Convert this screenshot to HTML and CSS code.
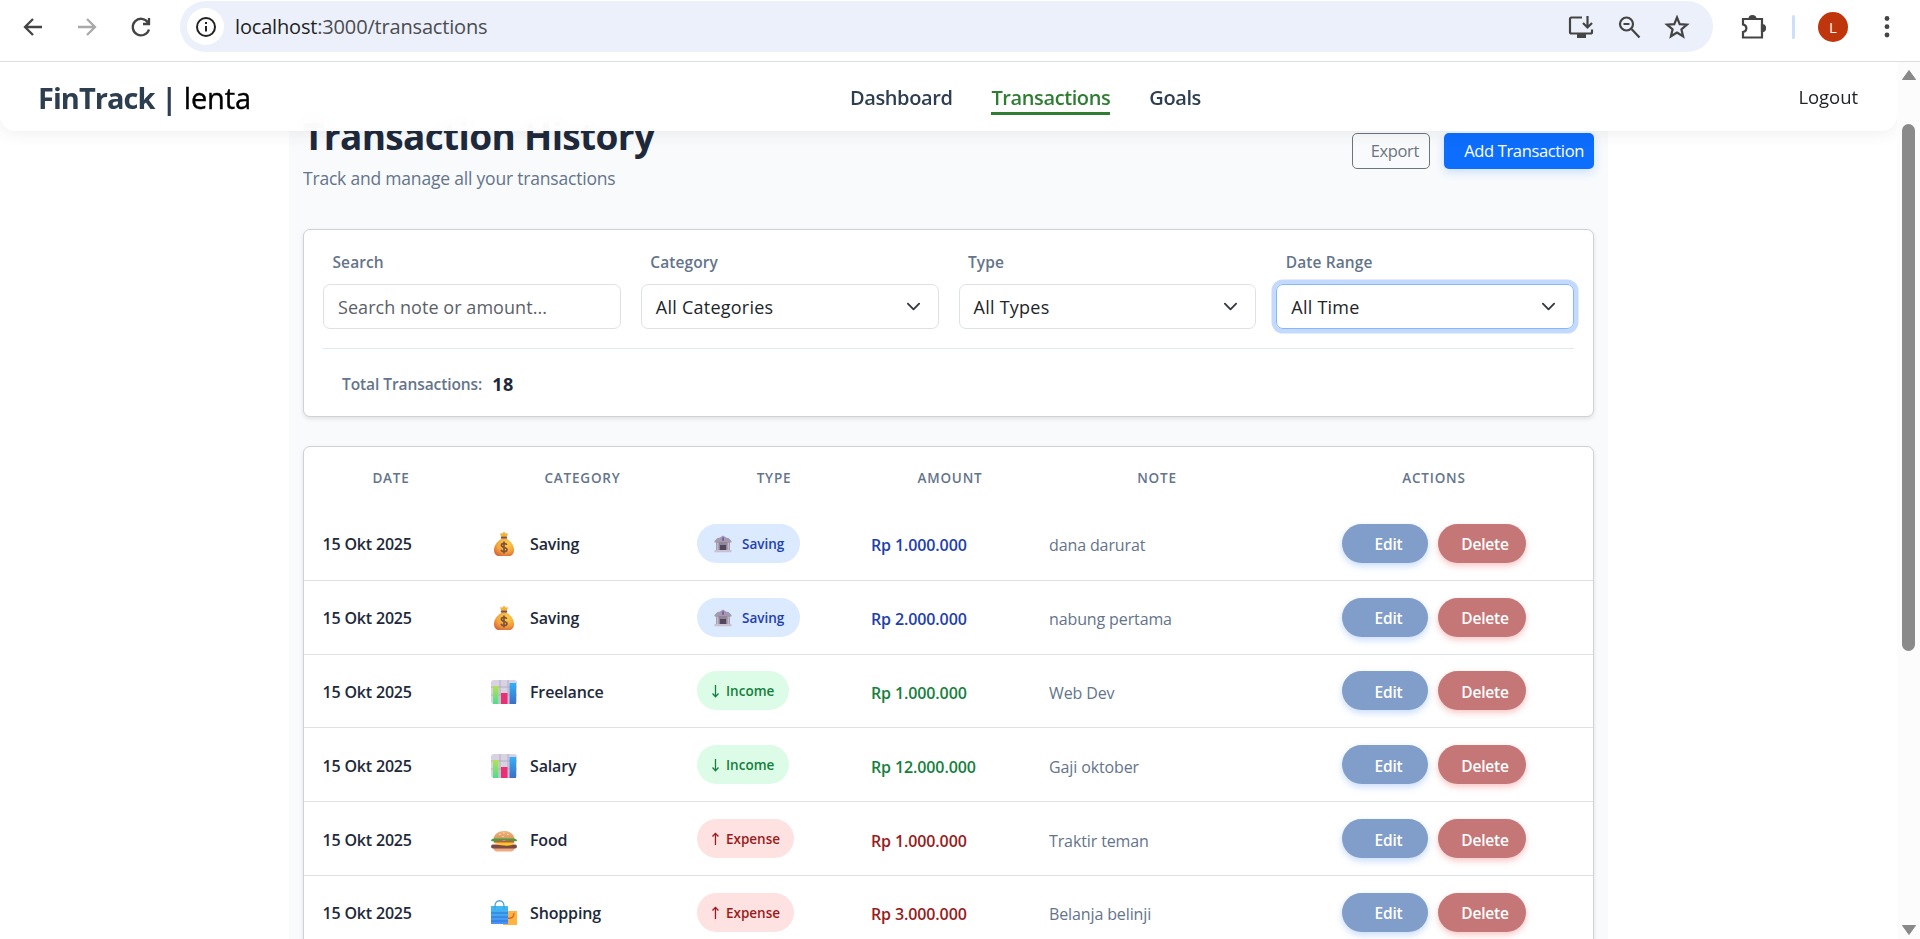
FILE: index.html
```html
<!DOCTYPE html>
<html lang="en">
<head>
<meta charset="utf-8">
<title>FinTrack</title>
<link rel="stylesheet" href="styles.css">
</head>
<body>
<svg class="defs" width="0" height="0">
  <defs>
    <radialGradient id="gBag" cx=".6" cy=".3" r=".8"><stop offset="0" stop-color="#ffd54a"/><stop offset=".6" stop-color="#f2a13a"/><stop offset="1" stop-color="#d3603c"/></radialGradient>
    <linearGradient id="gGreen" x1="0" y1="0" x2="0" y2="1"><stop offset="0" stop-color="#b4e34f"/><stop offset="1" stop-color="#4fdc92"/></linearGradient>
    <linearGradient id="gBlue" x1="0" y1="0" x2="0" y2="1"><stop offset="0" stop-color="#33b1fb"/><stop offset="1" stop-color="#3b6fc4"/></linearGradient>
    <linearGradient id="gShop" x1="0" y1="0" x2="0" y2="1"><stop offset="0" stop-color="#3fbcf0"/><stop offset="1" stop-color="#4a8cff"/></linearGradient>
    <linearGradient id="gBun" x1="0" y1="0" x2="0" y2="1"><stop offset="0" stop-color="#eeb67c"/><stop offset="1" stop-color="#d9935a"/></linearGradient>
  </defs>
  <symbol id="bag" viewBox="0 0 28 28">
    <path d="M11 9h6c4 2.500 7 6.500 7 11 0 4-2.500 6-5 6H9c-2.500 0-5-2-5-6C4 15.500 7 11.500 11 9z" fill="url(#gBag)"/>
    <path d="M14 1.500l1.500 2 2.500-.2-1.200 3.500h-5.600L10 3.300l2.500.2z" fill="#f5b136"/>
    <rect x="10.800" y="6.600" width="6.400" height="2.200" rx="1" fill="#8a5340"/>
    <path d="M16.800 15c-.5-1.300-1.500-1.700-2.800-1.700-1.600 0-2.600.8-2.600 2 0 2.800 5.600 1.500 5.600 4.300 0 1.400-1.300 2.200-3 2.200-1.500 0-2.500-.6-3-2M14 11.500v12" fill="none" stroke="#80503d" stroke-width="1.700"/>
  </symbol>
  <symbol id="chart" viewBox="0 0 28 28">
    <rect x="1" y="2" width="26" height="24" rx="3" fill="#d8d2e2"/>
    <path d="M10 2v24M18 2v24M1 9h26M1 17h26" stroke="#b6adc4" stroke-width="1"/>
    <path d="M3 8h5.500v18H3z" fill="url(#gGreen)"/>
    <path d="M11 15h6.500v11H11z" fill="#ea2f74"/>
    <path d="M19.500 5H26v21h-6.500z" fill="url(#gBlue)"/>
  </symbol>
  <symbol id="burger" viewBox="0 0 28 28">
    <path d="M3.500 14C3.500 8 8.500 5 14 5s10.500 3 10.500 9z" fill="url(#gBun)"/>
    <path d="M9 8.500h1.500M13 7h1.500M17 8.500h1.500M12 10.500h1.500" stroke="#fae3bd" stroke-width="1.200"/>
    <path d="M3.500 22h21c0 2-1.500 3.500-3.500 3.500H7c-2 0-3.500-1.500-3.500-3.500z" fill="#f0a880"/>
    <rect x="1" y="18.500" width="26" height="4" rx="2" fill="#7d4a43"/>
    <path d="M3 16h22l-3 3-5 .8-8-.8z" fill="#ffc928"/>
    <rect x="4" y="14.500" width="20" height="2" fill="#e8404f"/>
    <path d="M1 15c0-2 2-2.500 4-2.500h18c2 0 4 .5 4 2.500-2 1-4-.4-6.500 0s-3 .8-5-.2-4 .6-6 .4S3 16 1 15z" fill="#4f9c3c"/>
  </symbol>
  <symbol id="shop" viewBox="0 0 28 28">
    <path d="M13 12h14v14H13z" fill="#ffb43d"/>
    <path d="M17.500 19c4 1 6.500-1 6.500-5" fill="none" stroke="#e0632f" stroke-width="1.300"/>
    <path d="M1 7h17v18H1z" fill="url(#gShop)"/>
    <path d="M1 14h17M1 18h17M1 22h17" stroke="#2678c4" stroke-width="1.100"/>
    <path d="M5 10V7c0-7 9-7 9 0v3" fill="none" stroke="#4b9fd8" stroke-width="1.300"/>
  </symbol>
  <symbol id="bank" viewBox="0 0 18 18">
    <path d="M.5 6l3-3 2-.3L9 .5l3.500 2.200 2 .3 3 3v1.500H.5z" fill="#a39aae"/>
    <path d="M2 7h14v8H2z" fill="#8f8798"/>
    <path d="M2.500 7.500h2V15h-2zM13.500 7.500h2V15h-2z" fill="#c2bacb"/>
    <path d="M6 10h6v5H6z" fill="#51455f"/>
    <path d="M8.300 2.500h1.500v3.300H8.300z" fill="#7145b5"/>
    <path d="M.5 15h17v2.300H.5z" fill="#c9c0d0"/>
  </symbol>
  <symbol id="down" viewBox="0 0 9 16"><path d="M4.500 2v11.500M1.500 10.500l3 3.200 3-3.200"/></symbol>
  <symbol id="up" viewBox="0 0 9 16"><path d="M4.500 14V2.500M1.500 5.500l3-3.200 3 3.200"/></symbol>
  <symbol id="chev" viewBox="0 0 16 16"><path d="M2 5l6 6 6-6" fill="none" stroke="#343a40" stroke-width="2" stroke-linecap="round" stroke-linejoin="round"/></symbol>
</svg>

<div class="browser">
  <svg class="tool back" viewBox="0 0 24 24"><path d="M21 12H4M12 4l-8 8 8 8" /></svg>
  <svg class="tool fwd" viewBox="0 0 24 24"><path d="M3 12h17M12 4l8 8-8 8"/></svg>
  <svg class="tool reload" viewBox="0 0 24 24"><path d="M20 14.500A8.300 8.300 0 1 1 19 7.500M20 3v6h-6"/></svg>
  <div class="omnibox">
    <span class="site"><svg width="22" height="22" viewBox="0 0 22 22"><circle cx="11" cy="11" r="9" fill="none" stroke="#222" stroke-width="2"/><path d="M11 10v5.500M11 6v2" stroke="#222" stroke-width="2"/></svg></span>
    <span class="url"><b>localhost</b>:3000/transactions</span>
    <svg class="oi" viewBox="0 0 26 26"><path d="M14 3.500H3.500A1.500 1.500 0 0 0 2 5v13a1.500 1.500 0 0 0 1.500 1.500h19A1.500 1.500 0 0 0 24 18v-2.500M19.500 2v11M15 9l4.500 4.500L24 9"/><path d="M9 20h9v4H9z" fill="#444" stroke="none"/></svg>
    <svg class="oi" viewBox="0 0 26 26"><circle cx="10.500" cy="10" r="6.500"/><path d="M15.500 15l8 8.500M7.500 10h6"/></svg>
    <svg class="oi" viewBox="0 0 26 26"><path d="M13 3.500l2.700 6.700 7.200.5-5.500 4.600 1.700 7L13 18.500l-6.100 3.800 1.700-7-5.500-4.600 7.200-.5z"/></svg>
  </div>
  <svg class="ext" viewBox="0 0 26 26"><path d="M3 5h19v18.500H3v-5.500c4.500-.8 4.500-6.700 0-7.500z"/><path d="M9.500 5a3 3 0 0 1 6 0zM22 11a3 3 0 0 1 0 6z" fill="#444"/></svg>
  <i class="bar"></i>
  <span class="avatar">L</span>
  <svg class="dots" width="6" height="24" viewBox="0 0 6 24"><circle cx="3" cy="3.500" r="2.400"/><circle cx="3" cy="11.700" r="2.400"/><circle cx="3" cy="20" r="2.400"/></svg>
</div>

<div class="viewport">
  <div class="page">
    <nav class="nav">
      <div class="brand"><b>FinTrack |</b> <span>lenta</span></div>
      <div class="links"><a>Dashboard</a><a class="active">Transactions</a><a>Goals</a></div>
      <a class="logout">Logout</a>
    </nav>
    <main class="main">
      <header class="head">
        <div><h1>Transaction History</h1><p>Track and manage all your transactions</p></div>
        <div class="btns"><button class="export">Export</button><button class="add">Add Transaction</button></div>
      </header>
      <section class="card filters">
        <div class="fields">
          <div class="field"><label>Search</label><div class="ctl ph">Search note or amount...</div></div>
          <div class="field"><label>Category</label><div class="ctl">All Categories<svg><use href="#chev"/></svg></div></div>
          <div class="field"><label>Type</label><div class="ctl">All Types<svg><use href="#chev"/></svg></div></div>
          <div class="field"><label>Date Range</label><div class="ctl focus">All Time<svg><use href="#chev"/></svg></div></div>
        </div>
        <div class="total"><span>Total Transactions:</span><b>18</b></div>
      </section>
      <section class="card table">
        <div class="row th"><div>DATE</div><div>CATEGORY</div><div>TYPE</div><div>AMOUNT</div><div>NOTE</div><div>ACTIONS</div></div>
        <div class="row saving"><div class="date">15 Okt 2025</div><div class="cat"><svg><use href="#bag"/></svg>Saving</div><div><span class="badge"><svg class="emoji"><use href="#bank"/></svg>Saving</span></div><div class="amt">Rp 1.000.000</div><div class="note">dana darurat</div><div class="act"><button class="edit">Edit</button><button class="del">Delete</button></div></div>
        <div class="row saving"><div class="date">15 Okt 2025</div><div class="cat"><svg><use href="#bag"/></svg>Saving</div><div><span class="badge"><svg class="emoji"><use href="#bank"/></svg>Saving</span></div><div class="amt">Rp 2.000.000</div><div class="note">nabung pertama</div><div class="act"><button class="edit">Edit</button><button class="del">Delete</button></div></div>
        <div class="row income"><div class="date">15 Okt 2025</div><div class="cat"><svg><use href="#chart"/></svg>Freelance</div><div><span class="badge"><svg class="arrow"><use href="#down"/></svg>Income</span></div><div class="amt">Rp 1.000.000</div><div class="note">Web Dev</div><div class="act"><button class="edit">Edit</button><button class="del">Delete</button></div></div>
        <div class="row income"><div class="date">15 Okt 2025</div><div class="cat"><svg><use href="#chart"/></svg>Salary</div><div><span class="badge"><svg class="arrow"><use href="#down"/></svg>Income</span></div><div class="amt">Rp 12.000.000</div><div class="note">Gaji oktober</div><div class="act"><button class="edit">Edit</button><button class="del">Delete</button></div></div>
        <div class="row expense"><div class="date">15 Okt 2025</div><div class="cat"><svg><use href="#burger"/></svg>Food</div><div><span class="badge"><svg class="arrow"><use href="#up"/></svg>Expense</span></div><div class="amt">Rp 1.000.000</div><div class="note">Traktir teman</div><div class="act"><button class="edit">Edit</button><button class="del">Delete</button></div></div>
        <div class="row expense"><div class="date">15 Okt 2025</div><div class="cat"><svg><use href="#shop"/></svg>Shopping</div><div><span class="badge"><svg class="arrow"><use href="#up"/></svg>Expense</span></div><div class="amt">Rp 3.000.000</div><div class="note">Belanja belinji</div><div class="act"><button class="edit">Edit</button><button class="del">Delete</button></div></div>
      </section>
    </main>
  </div>
  <div class="scroll">
    <svg width="16" height="12" viewBox="0 0 16 12"><path d="M8 1.500L14.500 10.500h-13z"/></svg>
    <i class="thumb"></i>
    <svg class="down" width="16" height="12" viewBox="0 0 16 12"><path d="M8 10.500L14.500 1.500h-13z"/></svg>
  </div>
</div>
</body>
</html>
```
FILE: styles.css
```css
* { box-sizing: border-box; }
html, body { height: 100%; }
body { margin: 0; overflow: hidden; background: #fff; color: #212529; font-family: "Open Sans", "Noto Sans", sans-serif; display: flex; flex-direction: column; }
button { font-family: inherit; }
.defs { flex: none; height: 0; width: 0; }

.browser { flex: none; height: 62px; border-bottom: 1px solid #dcdddf; display: flex; align-items: center; padding: 1px 0 9px; }
.tool { flex: none; width: 24px; height: 24px; fill: none; stroke: #444; stroke-width: 2.300; }
.back { margin-left: 21px; }
.fwd { margin-left: 30px; stroke: #a9a9a9; }
.reload { margin-left: 30px; }
.omnibox { margin-left: 27px; width: 1533px; height: 51px; border-radius: 26px; background: #ecf0fa; display: flex; align-items: center; padding: 0 23px 0 7px; }
.site { width: 37px; height: 37px; border-radius: 50%; background: #fff; display: flex; align-items: center; justify-content: center; }
.url { margin-left: 11px; margin-right: auto; font-size: 20px; letter-spacing: -0.170px; color: #4a4c50; }
.url b { font-weight: 400; color: #1d1f22; }
.oi, .ext { width: 26px; height: 26px; fill: none; stroke: #444; stroke-width: 2.200; }
.oi { margin-left: 22px; }
.ext { margin-left: 27px; }
.bar { width: 3px; height: 24px; background: #cfdefa; margin-left: 26px; border-radius: 2px; }
.avatar { margin-left: 23px; width: 30px; height: 30px; border-radius: 50%; background: #bf360c; color: #fff; font-size: 15px; display: flex; align-items: center; justify-content: center; }
.dots { margin-left: 36px; fill: #444; }

.viewport { flex: 1; min-height: 0; display: flex; }
.page { width: 1897px; overflow: hidden; }
.scroll { width: 23px; background: #fcfcfc; display: flex; flex-direction: column; align-items: center; padding: 7px 0 3px; fill: #898989; stroke: #898989; stroke-linejoin: round; }
.thumb { width: 13px; height: 527px; margin-top: 43px; border-radius: 7px; background: #8a8a8a; }
.down { margin-top: auto; }

.nav { position: relative; z-index: 2; height: 69px; background: rgba(255,255,255,.95); backdrop-filter: blur(10px); border-radius: 0 0 16px 16px; box-shadow: 0 2px 18px rgba(0,0,0,.07); display: grid; grid-template-columns: 850px 1fr auto; align-items: center; padding-right: 39px; }
.brand { padding: 1px 0 0 38px; font-size: 29px; color: #2c3e50; }
.brand b { font-weight: 700; letter-spacing: -0.950px; }
.brand span { font-weight: 500; letter-spacing: -0.150px; color: #000; -webkit-text-stroke: 0.400px #000; }
.links { display: flex; gap: 39px; padding-top: 2px; font-size: 20px; font-weight: 600; letter-spacing: -0.400px; color: #2c3e50; }
.links a { height: 34px; line-height: 33px; border-bottom: 3px solid transparent; }
.links .active { color: #2e7d32; border-color: #2e7d32; }
.logout { font-size: 18.500px; letter-spacing: -0.050px; }

.main { margin: -69px auto 0 289px; width: 1319px; height: 877px; background: #f8fafc; padding: 47px 14px 0; }
.head { display: flex; justify-content: space-between; align-items: flex-start; height: 120px; }
h1 { margin: 0; font-size: 37px; line-height: 54px; font-weight: 700; letter-spacing: -0.650px; color: #1e293b; }
.head p { margin: 2px 0 0; font-size: 17.500px; line-height: 26px; letter-spacing: -0.200px; color: #64748b; }
.btns { display: flex; gap: 14px; padding-top: 24px; }
.btns button { height: 36px; font-size: 16.500px; letter-spacing: -0.350px; border-radius: 5px; text-align: right; padding: 0 10px 1px; }
.export { width: 78px; border: 1px solid #6c757d; color: #6c757d; background: #f8fafc; }
.add { width: 150px; border: 0; color: #fff; background: #0d6efd; box-shadow: 0 3px 10px rgba(13,110,253,.2); }

.card { background: #fff; border: 1px solid #cfd1d5; border-radius: 7px; box-shadow: 0 2px 4px rgba(0,0,0,.1); }
.filters { height: 188px; padding: 19px 19px 0; }
.fields { display: grid; grid-template-columns: repeat(4, 1fr); gap: 20px; padding-bottom: 19px; border-bottom: 1px solid #e2e8f0; }
label { display: block; height: 35px; padding-left: 9.500px; line-height: 26px; font-size: 15.500px; font-weight: 600; letter-spacing: 0.100px; color: #64748b; }
.ctl { height: 45px; border: 1px solid #dee2e6; border-radius: 7px; padding: 0 18px 0 14px; display: flex; align-items: center; justify-content: space-between; font-size: 18px; letter-spacing: 0.250px; color: #212529; }
.ctl svg { width: 15px; height: 15px; margin-right: -1px; }
.ctl.ph { color: #5c6167; letter-spacing: 0.050px; }
.ctl.focus { border-color: #86b7fe; box-shadow: 0 0 0 4.500px #c3dafe; }
.total { display: flex; gap: 10px; align-items: center; padding: 22px 19px 0; line-height: 26px; font-size: 15.500px; font-weight: 600; letter-spacing: -0.080px; color: #64748b; }
.total b { font-size: 18px; font-weight: 700; letter-spacing: 0.500px; color: #1e293b; }

.table { margin-top: 29px; }
.row { display: grid; grid-template-columns: 174px 209px 174px 178px 236px 1fr; height: 73.800px; align-items: center; border-bottom: 1px solid #dee2e6; }
.row > div { padding-left: 10px; }
.row.th { height: 60px; border: 0; font-size: 13.500px; font-weight: 600; letter-spacing: 0.800px; color: #64748b; text-align: center; }
.row.th > div { padding: 1px 0 0; }
.row .date { padding: 2px 0 0 18.500px; font-size: 16px; font-weight: 600; letter-spacing: -0.180px; color: #1e293b; }
.row .cat { padding: 2px 0 0 12px; display: flex; align-items: center; gap: 12px; font-size: 16px; font-weight: 600; letter-spacing: -0.150px; color: #1e293b; }
.cat svg { width: 28px; height: 28px; }
.badge { display: inline-flex; align-items: center; height: 39px; border-radius: 20px; font-size: 13.500px; font-weight: 600; padding: 1px 14px 0; }
.emoji { width: 18px; height: 18px; margin-right: 10px; }
.arrow { width: 9px; height: 16px; margin-right: 6px; fill: none; stroke: currentColor; stroke-width: 1.300; }
.row .amt, .row .note { padding-top: 4px; }
.amt { font-size: 16px; font-weight: 600; letter-spacing: -0.120px; }
.note { font-size: 16px; letter-spacing: -0.120px; color: #64748b; }
.saving .badge { width: 103px; padding-left: 17px; background: #dbeafe; color: #1e40af; }
.income .badge { width: 92px; background: #dcfce7; color: #15803d; }
.expense .badge { width: 97px; background: #fee2e2; color: #991b1b; }
.saving .amt { color: #1e40af; }
.income .amt { color: #15803d; }
.expense .amt { color: #991b1b; }
.row .act { display: flex; gap: 10px; padding-left: 67px; }
.act button { height: 39px; border: 0; border-radius: 20px; color: #fff; font-size: 15.500px; font-weight: 600; letter-spacing: -0.200px; }
.act .edit { width: 86px; padding: 2px 0 0 7px; background: #819dc9; box-shadow: 0 3px 7px rgba(59,130,246,.28); }
.act .del { width: 88px; padding: 2px 0 0 6px; background: #c57777; box-shadow: 0 3px 6px rgba(239,68,68,.3); }
```
